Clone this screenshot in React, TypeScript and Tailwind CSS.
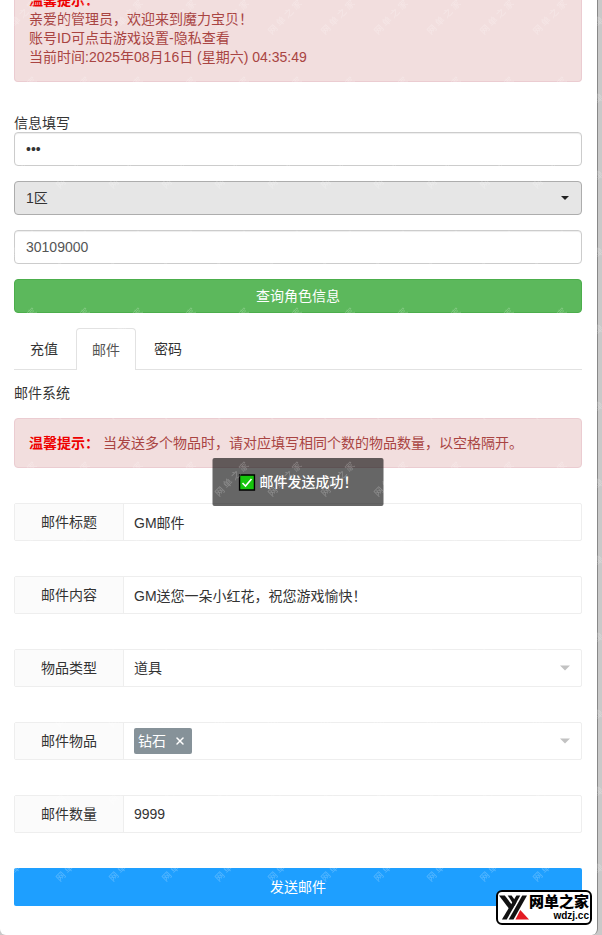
import { useState, type ReactNode } from "react";
import { X } from "lucide-react";

const tabs = ["充值", "邮件", "密码"];

function Caret({ className }: { className: string }) {
  return (
    <svg className={`pointer-events-none absolute top-1/2 -translate-y-1/2 ${className}`} viewBox="0 0 12 6" fill="currentColor">
      <path d="M0 0h12L6 6z" />
    </svg>
  );
}

function FormRow({ id, label, children }: { id: string; label: string; children: ReactNode }) {
  return (
    <div className="flex h-[38px] rounded-xs border border-[#eeeeee]">
      <label htmlFor={id} className="flex w-[109px] shrink-0 items-center justify-center border-r border-[#eeeeee] bg-[#fbfbfb]">
        {label}
      </label>
      <div className="relative flex min-w-0 flex-1 items-center">{children}</div>
    </div>
  );
}

// Site name repeated diagonally over the whole page
function Watermark() {
  return (
    <svg className="pointer-events-none absolute inset-0 size-full" aria-hidden="true">
      <defs>
        <pattern id="mark" x="0" y="39" width="53" height="77" patternUnits="userSpaceOnUse">
          <text transform="translate(7 73) rotate(-46)" fill="#fff" fillOpacity="0.25" fontSize="9">
            网 单 之 家
          </text>
        </pattern>
      </defs>
      <rect width="100%" height="100%" fill="url(#mark)" />
    </svg>
  );
}

function SiteBadge() {
  return (
    <div className="absolute right-[10px] bottom-[10px] flex h-[35px] w-24 items-center justify-between rounded-md border-2 border-black bg-white px-px">
      <svg className="h-[25px] w-[30px] shrink-0" viewBox="0 0 31 25">
        <path d="M0 0h6l9 12-3 4z" fill="#111" />
        <path d="M9 0h4l5 7-2 4z" fill="#111" />
        <path d="M18 0h4L8 25H3z" fill="#111" />
        <path d="M24 0h5L15 25h-5z" fill="#111" />
        <path d="M22 15l9 10H17z" fill="#e31b23" />
      </svg>
      <div className="flex flex-col items-end font-bold text-black">
        <span className="text-[15px] leading-4 font-black">网单之家</span>
        <span className="text-[10px] leading-3">wdzj.cc</span>
      </div>
    </div>
  );
}

export default function App() {
  const [tab, setTab] = useState("邮件");

  return (
    <div className="relative overflow-hidden bg-[#c9c9c9] pr-1 font-['Liberation_Sans','Noto_Sans_CJK_SC',sans-serif] text-sm text-[#333333]">
      <div className="rounded-b-md border-r border-[#888888] bg-white pr-[15px] pb-[29px] pl-[14px]">
        {/* Notice, scrolled partly out of view */}
        <div className="-mt-[9px] rounded-b border border-t-0 border-[#ebccd1] bg-[#f2dede] px-[14px] pb-[14px] leading-[19px] text-[#a94442]">
          <p className="font-bold text-[#ee0000]">温馨提示：</p>
          <p>亲爱的管理员，欢迎来到魔力宝贝！</p>
          <p>账号ID可点击游戏设置-隐私查看</p>
          <p>当前时间:2025年08月16日 (星期六) 04:35:49</p>
        </div>

        <div className="mt-8 flex flex-col">
          <label htmlFor="gm-code" className="leading-[18px]">信息填写</label>
          <div className="flex flex-col gap-[15px]">
            <input
              id="gm-code"
              type="password"
              defaultValue="123"
              className="h-[34px] w-full rounded border border-[#cccccc] px-[11px] shadow-[inset_0_1px_1px_rgba(0,0,0,0.075)]"
            />
            <div className="relative">
              <select aria-label="区服" className="h-[34px] w-full appearance-none rounded border border-[#adadad] bg-[#e6e6e6] px-[11px]">
                <option>1区</option>
              </select>
              <Caret className="right-[13px] h-1 w-2 text-[#222222]" />
            </div>
            <input
              aria-label="账号ID"
              defaultValue="30109000"
              className="h-[34px] w-full rounded border border-[#cccccc] px-[11px] text-[#555555] shadow-[inset_0_1px_1px_rgba(0,0,0,0.075)]"
            />
            <button className="h-[34px] w-full rounded border border-[#4cae4c] bg-[#5cb85c] text-white">查询角色信息</button>
          </div>
        </div>

        <div role="tablist" className="mt-[15px] flex gap-[2px] border-b border-[#e2e2e2]">
          {tabs.map((name) => (
            <button
              key={name}
              role="tab"
              aria-selected={tab === name}
              onClick={() => setTab(name)}
              className={
                tab === name
                  ? "-mb-px h-[42px] rounded-t border border-b-0 border-[#e2e2e2] bg-white px-[15px] text-[#555555]"
                  : "h-[41px] border border-transparent px-[15px]"
              }
            >
              {name}
            </button>
          ))}
        </div>

        <h2 className="mt-[13px] leading-5">邮件系统</h2>

        <div className="relative mt-[15px] rounded border border-[#ebccd1] bg-[#f2dede] px-[14px] py-[14px] leading-5 text-[#a94442]">
          <strong className="text-[#ee0000]">温馨提示：</strong> 当发送多个物品时，请对应填写相同个数的物品数量，以空格隔开。
          {/* Toast */}
          <div
            role="status"
            className="absolute top-[39px] left-1/2 flex h-12 -translate-x-1/2 items-center gap-1 rounded-xs bg-black/60 px-[26px] whitespace-nowrap text-white"
          >
            <svg className="size-[17px] shrink-0" viewBox="0 0 17 17">
              <rect x="1" y="1" width="15" height="15" fill="#16c60c" stroke="#000" strokeWidth="1.5" />
              <path d="M4 9l3 3 6-7" fill="none" stroke="#fff" strokeWidth="1.6" />
            </svg>
            <span className="font-medium">邮件发送成功！</span>
          </div>
        </div>

        <form className="mt-[35px] flex flex-col gap-[35px]" onSubmit={(e) => e.preventDefault()}>
          <FormRow id="title" label="邮件标题">
            <input id="title" defaultValue="GM邮件" className="h-full w-full px-[10px]" />
          </FormRow>
          <FormRow id="content" label="邮件内容">
            <input id="content" defaultValue="GM送您一朵小红花，祝您游戏愉快！" className="h-full w-full px-[10px]" />
          </FormRow>
          <FormRow id="kind" label="物品类型">
            <select id="kind" className="h-full w-full appearance-none px-[10px]">
              <option>道具</option>
            </select>
            <Caret className="right-[11px] h-[6px] w-[10px] text-[#c2c2c2]" />
          </FormRow>
          <FormRow id="item" label="邮件物品">
            <span className="ml-[10px] flex h-[26px] items-center gap-2 rounded-xs bg-[#869299] pr-[6px] pl-1 text-white">
              钻石
              <button id="item" type="button" aria-label="移除钻石">
                <X size={12} strokeWidth={3} />
              </button>
            </span>
            <Caret className="right-[11px] h-[6px] w-[10px] text-[#c2c2c2]" />
          </FormRow>
          <FormRow id="count" label="邮件数量">
            <input id="count" defaultValue="9999" className="h-full w-full px-[10px]" />
          </FormRow>
          <button type="submit" className="h-[38px] w-full rounded-xs bg-[#1e9fff] text-white">发送邮件</button>
        </form>
      </div>
      <Watermark />
      <SiteBadge />
    </div>
  );
}
